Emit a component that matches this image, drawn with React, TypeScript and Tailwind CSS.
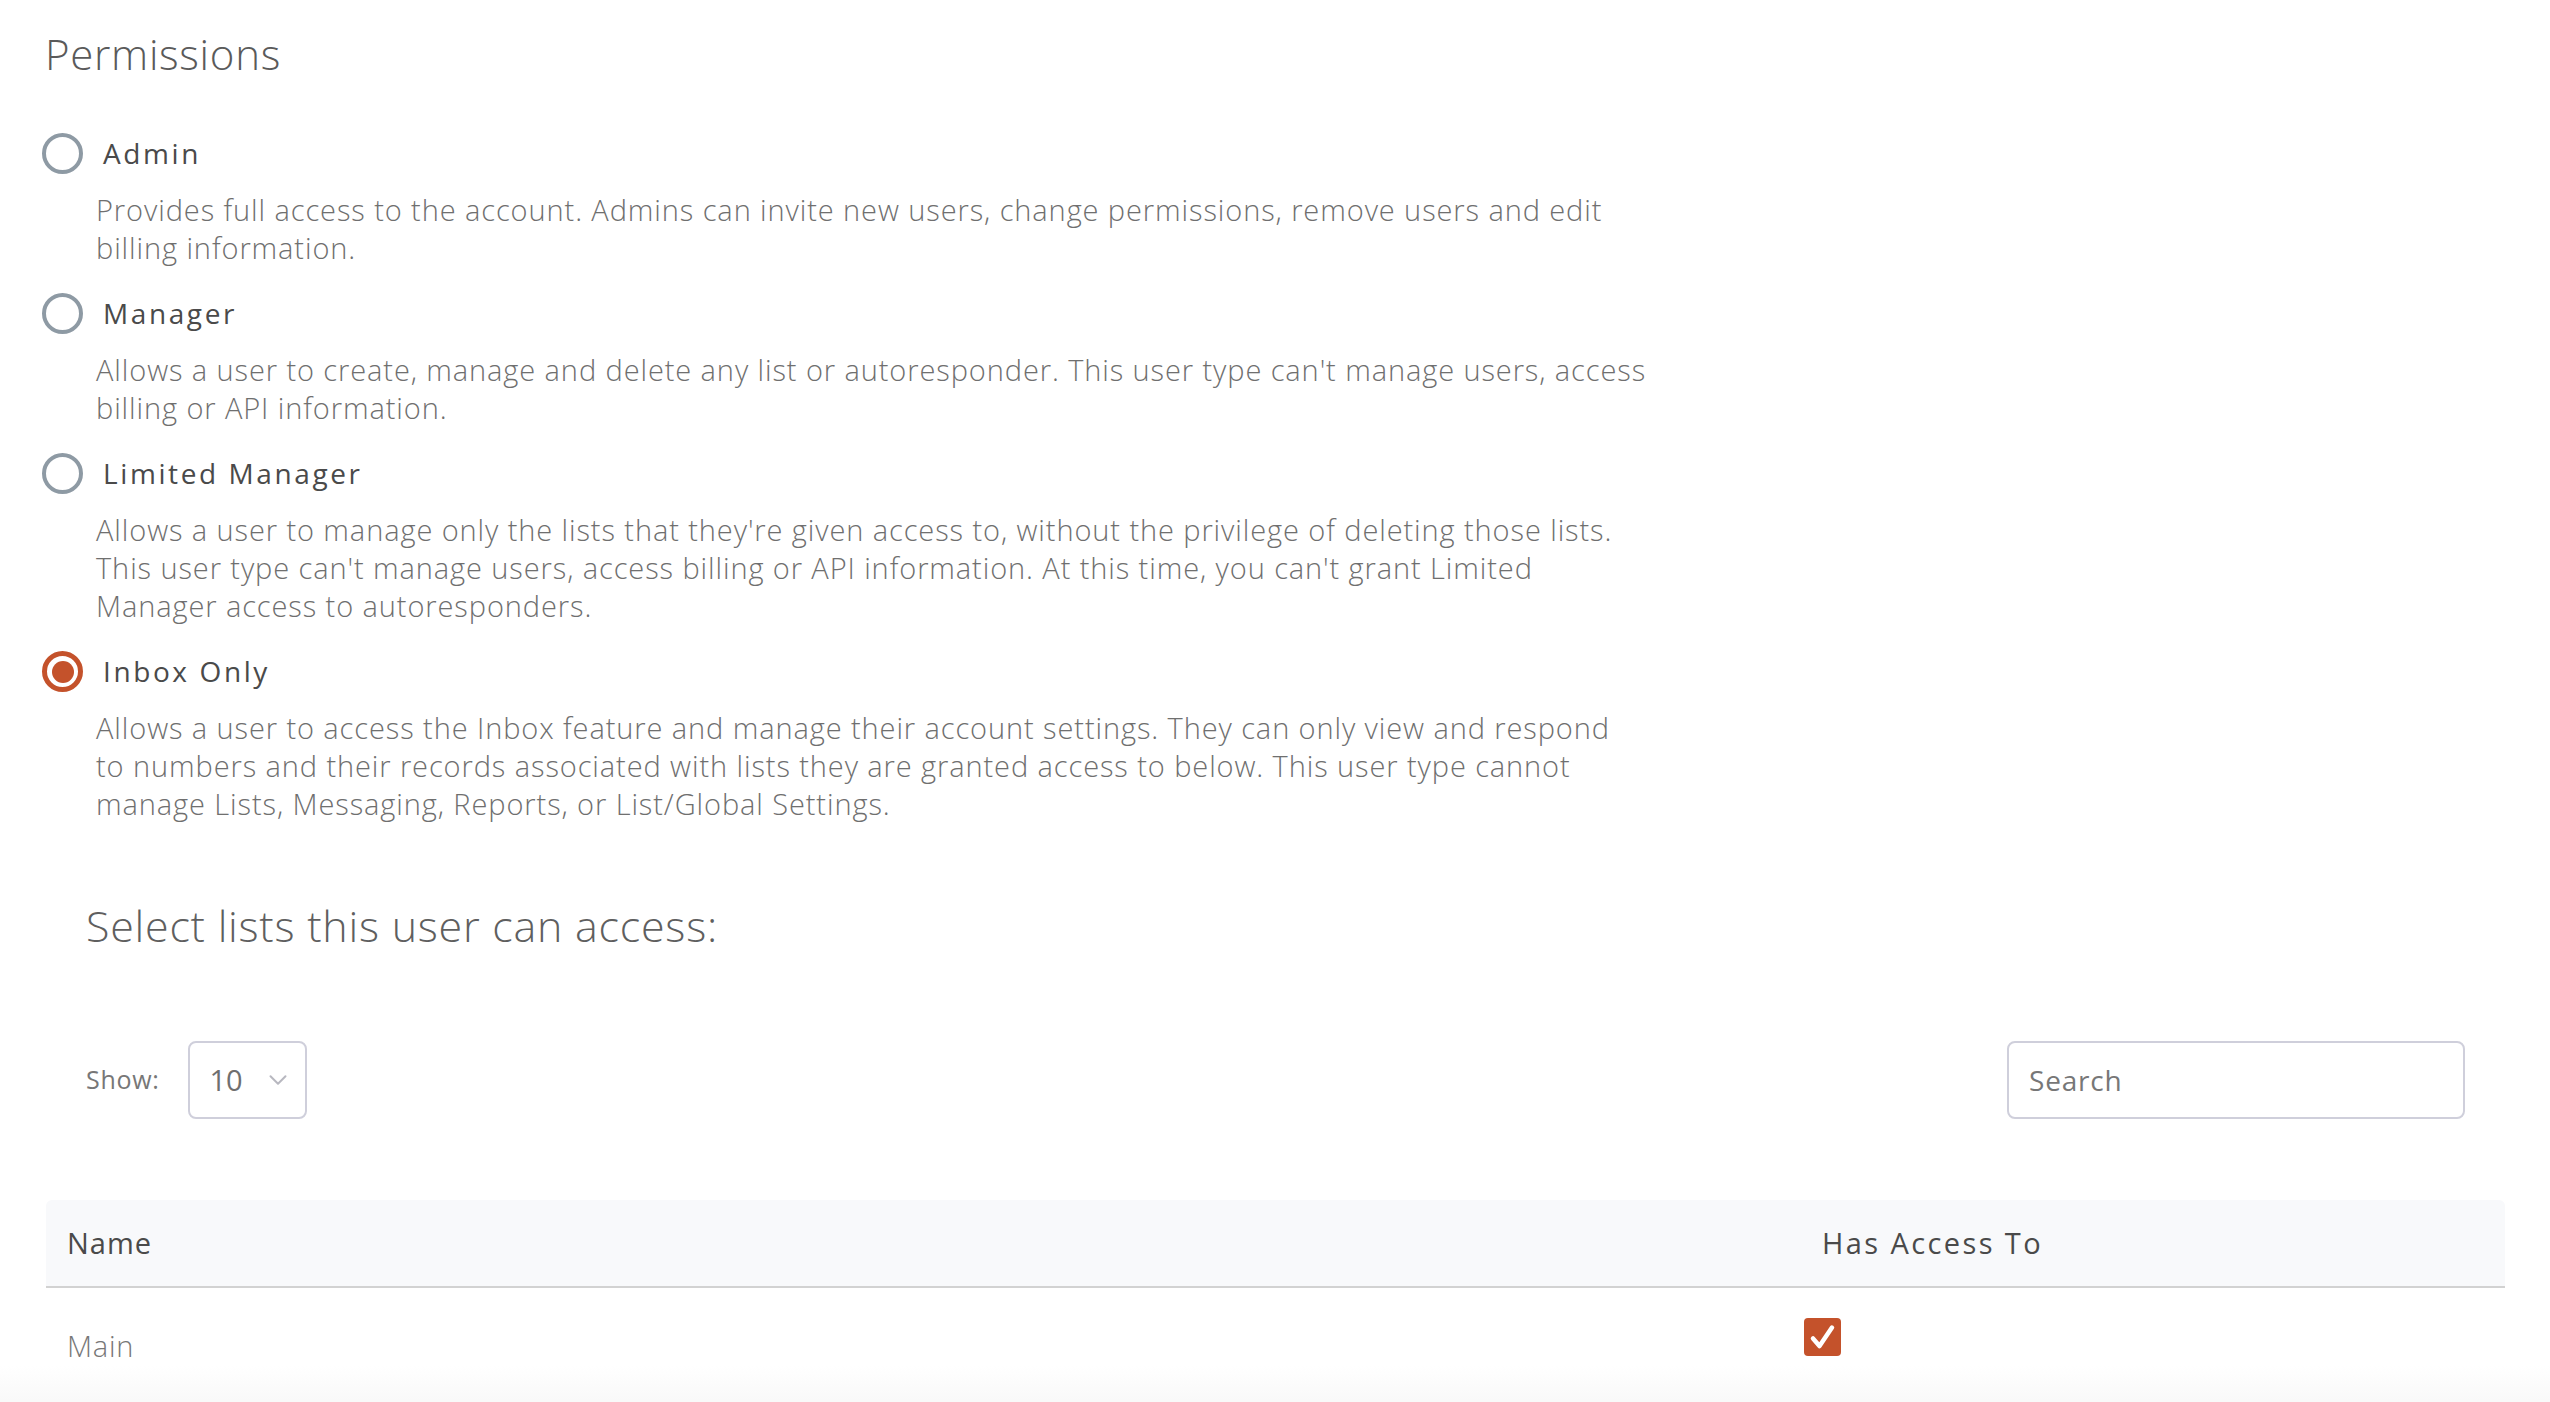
import { ChevronDown } from "lucide-react";

// lines are kept as in the design so wraps match the mock
const roles = [
  {
    id: "admin",
    label: "Admin",
    lines: [
      "Provides full access to the account. Admins can invite new users, change permissions, remove users and edit",
      "billing information.",
    ],
  },
  {
    id: "manager",
    label: "Manager",
    lines: [
      "Allows a user to create, manage and delete any list or autoresponder. This user type can't manage users, access",
      "billing or API information.",
    ],
  },
  {
    id: "limited",
    label: "Limited Manager",
    lines: [
      "Allows a user to manage only the lists that they're given access to, without the privilege of deleting those lists.",
      "This user type can't manage users, access billing or API information. At this time, you can't grant Limited",
      "Manager access to autoresponders.",
    ],
  },
  {
    id: "inbox",
    label: "Inbox Only",
    lines: [
      "Allows a user to access the Inbox feature and manage their account settings. They can only view and respond",
      "to numbers and their records associated with lists they are granted access to below. This user type cannot",
      "manage Lists, Messaging, Reports, or List/Global Settings.",
    ],
  },
];

function Radio({ checked }: { checked: boolean }) {
  if (checked) {
    return (
      <span className="grid size-[41px] shrink-0 place-items-center rounded-full border-[5px] border-[#c4522b]">
        <span className="size-[22px] rounded-full bg-[#c4522b]" />
      </span>
    );
  }
  return <span className="size-[41px] shrink-0 rounded-full border-[4px] border-[#8e9aa4]" />;
}

export default function App() {
  const selected = "inbox";

  return (
    <main className="h-[1402px] w-full overflow-hidden bg-white font-['Open_Sans','Noto_Sans',sans-serif] text-[#555]">
      <h1 className="pl-[45px] pt-[29px] text-[42px] font-light leading-[50px] tracking-[0.7px] text-[#5a5a5a]">Permissions</h1>

      <div className="mt-[54px] flex flex-col gap-[26px] pl-[42px]">
        {roles.map((role) => (
          <div key={role.id}>
            <label className="flex items-center gap-[20px]">
              <Radio checked={role.id === selected} />
              <span className="text-[28px] leading-[41px] tracking-[2.6px] text-[#4a4a4a]">{role.label}</span>
            </label>
            <p className="mt-[17px] pl-[54px] text-[29px] font-light leading-[38px] tracking-[0.9px] text-[#6f6f6f]">
              {role.lines.map((line) => (
                <span className="block whitespace-nowrap" key={line}>
                  {line}
                </span>
              ))}
            </p>
          </div>
        ))}
      </div>

      <h2 className="mt-[79px] pl-[86px] text-[43px] font-light leading-[48px] tracking-[0.75px] text-[#5f5f5f]">
        Select lists this user can access:
      </h2>

      <div className="mt-[91px] flex items-center justify-between pl-[86px] pr-[85px]">
        <div className="flex items-center gap-[28px]">
          <span className="text-[25px] tracking-[0.7px] text-[#777]">Show:</span>
          <div className="flex h-[78px] w-[119px] items-center justify-between rounded-[8px] border-2 border-[#cfcfdb] pl-[20px] pr-[12px]">
            <span className="text-[29px] text-[#6f6f6f]">10</span>
            <ChevronDown className="text-[#b8b8c0]" size={30} strokeWidth={1.6} />
          </div>
        </div>
        <div className="flex h-[78px] w-[458px] items-center rounded-[8px] border-2 border-[#cfcfdb] px-[20px]">
          <span className="text-[28px] tracking-[0.8px] text-[#777]">Search</span>
        </div>
      </div>

      <div className="ml-[46px] mr-[45px] mt-[81px]">
        <div className="grid h-[88px] grid-cols-[1738px_1fr] items-center rounded-t-[6px] border-b-2 border-[#d2d2d2] bg-[#f8f9fb]">
          <span className="pl-[21px] text-[29px] tracking-[1px] text-[#4a4a4a]">Name</span>
          <span className="pl-[38px] text-[29px] tracking-[2.4px] text-[#4a4a4a]">Has Access To</span>
        </div>
        <div className="grid h-[78px] grid-cols-[1738px_1fr] items-start">
          <span className="pl-[21px] pt-[38px] text-[29px] font-light leading-[40px] tracking-[0.8px] text-[#777]">Main</span>
          <span className="pl-[20px] pt-[30px]">
            <svg className="block" width="37" height="38" viewBox="0 0 37 38">
              <rect width="37" height="38" rx="4" fill="#c4522b" />
              <path d="M9 20.5 L15.5 28 L28 9.5" fill="none" stroke="#fff" strokeWidth="4.5" strokeLinecap="round" strokeLinejoin="round" />
            </svg>
          </span>
        </div>
      </div>
      <div className="h-[40px] bg-gradient-to-b from-white to-[#f8f8f8]" />
    </main>
  );
}
